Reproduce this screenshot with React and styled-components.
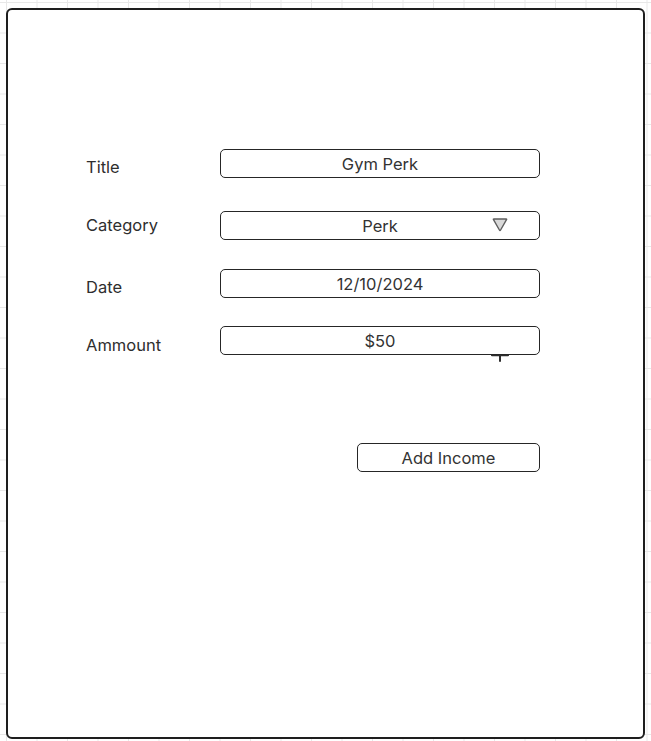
import React from "react";
import styled, { createGlobalStyle } from "styled-components";

const Global = createGlobalStyle`
  html, body { margin: 0; padding: 0; }
  body {
    width: 651px;
    height: 741px;
    overflow: hidden;
    font-family: Inter, "Noto Sans", sans-serif;
    background-color: #ffffff;
    background-image:
      linear-gradient(to right, #e8e8e8 1px, transparent 1px),
      linear-gradient(to bottom, #e8e8e8 1px, transparent 1px);
    background-size: 30.5px 30.5px;
    background-position: 6px 2px;
  }
`;

const Page = styled.div`
  padding: 8px 6px 2px 6px;
  box-sizing: border-box;
  height: 741px;
`;

const Card = styled.div`
  box-sizing: border-box;
  width: 639px;
  height: 731px;
  background: #fff;
  border: 2px solid #1e1e1e;
  border-radius: 6px;
  padding: 139px 0 0 78px;
`;

const Form = styled.div`
  display: flex;
  flex-direction: column;
  width: 454px;
`;

const Row = styled.div`
  display: grid;
  grid-template-columns: 134px 320px;
  align-items: start;
  margin-top: ${(p) => p.$top || 0}px;
  position: relative;
`;

const Label = styled.div`
  font-size: 16.5px;
  color: #2e2e2e;
  line-height: 20px;
  padding-top: ${(p) => p.$pt ?? 8}px;
`;

const Field = styled.div`
  box-sizing: border-box;
  height: 29px;
  border: 1.8px solid #262626;
  border-radius: 5px;
  background: #fff;
  display: flex;
  align-items: center;
  justify-content: center;
  font-size: 16.5px;
  color: #333;
  position: relative;
`;

const Caret = styled.svg`
  position: absolute;
  right: 30px;
  top: 5px;
`;

const Peek = styled.svg`
  position: absolute;
  left: 405px;
  top: 27px;
  z-index: 0;
`;

const ButtonRow = styled.div`
  display: flex;
  justify-content: flex-end;
  margin-top: 88px;
  width: 454px;
`;

const Button = styled.button`
  box-sizing: border-box;
  width: 183px;
  height: 29px;
  border: 1.8px solid #262626;
  border-radius: 5px;
  background: #fff;
  font-family: Inter, "Noto Sans", sans-serif;
  font-size: 16.5px;
  color: #333;
  padding: 0;
`;

export default function App() {
  return (
    <>
      <Global />
      <Page>
        <Card>
          <Form>
            <Row>
              <Label $pt={8}>Title</Label>
              <Field>Gym Perk</Field>
            </Row>
            <Row $top={33}>
              <Label $pt={4}>Category</Label>
              <Field>
                Perk
                <Caret width="18" height="16" viewBox="0 0 18 16">
                  <path
                    d="M2.5 2.5 Q2 2 2.8 2 H15.2 Q16 2 15.5 2.7 L9.6 13 Q9 14 8.4 13 L2.5 2.7 Z"
                    fill="#d9d9d9"
                    stroke="#5e5e5e"
                    strokeWidth="1.4"
                    strokeLinejoin="round"
                  />
                </Caret>
              </Field>
            </Row>
            <Row $top={29}>
              <Label $pt={8}>Date</Label>
              <Field>12/10/2024</Field>
            </Row>
            <Row $top={28}>
              <Label $pt={9}>Ammount</Label>
              <Peek width="18" height="9" viewBox="0 0 18 9">
                <path d="M1 2 H17" stroke="#2e2e2e" strokeWidth="2.4" strokeLinecap="round" />
                <path d="M9 1 V8" stroke="#2e2e2e" strokeWidth="2" strokeLinecap="round" />
              </Peek>
              <Field>$50</Field>
            </Row>
          </Form>
          <ButtonRow>
            <Button>Add Income</Button>
          </ButtonRow>
        </Card>
      </Page>
    </>
  );
}
